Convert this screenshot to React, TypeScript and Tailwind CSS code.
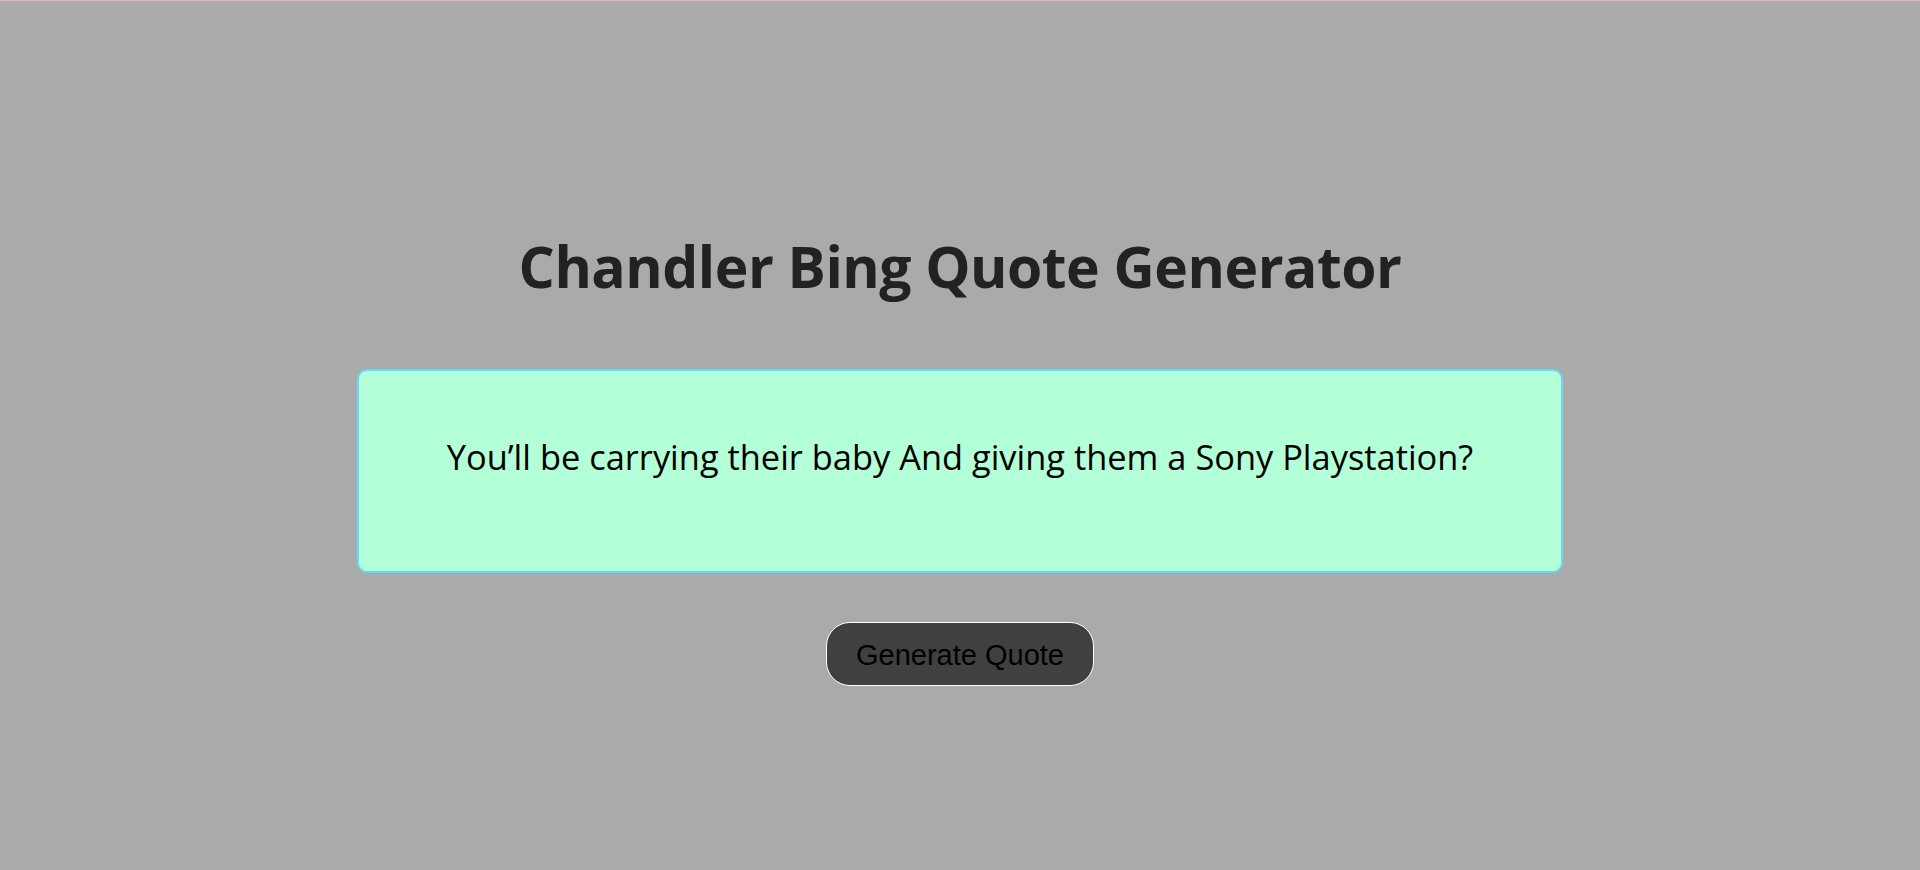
const App = () => {
  return (
    <div className="min-h-screen w-full bg-[#aaaaaa] border-t border-[#e8b4c0] flex flex-col items-center font-['Segoe_UI','Open_Sans',sans-serif]">
      <h1 className="mt-[222px] text-[57px] leading-[86px] font-bold text-[#222222] tracking-[-0.5px]">
        Chandler Bing Quote Generator
      </h1>

      <div className="mt-[60px] w-[1206px] h-[204px] bg-[#b3ffd7] border-2 border-[#61dafb] rounded-[10px] flex justify-center pt-[61px]">
        <p className="text-[34.4px] leading-[50px] text-black">
          You’ll be carrying their baby And giving them a Sony Playstation?
        </p>
      </div>

      <button className="mt-[49px] w-[268px] h-[64px] pt-[4px] rounded-[24px] border border-white bg-[#404040] text-black text-[29px] font-['Liberation_Sans',Arial,sans-serif]">
        Generate Quote
      </button>
    </div>
  );
};

export default App;
